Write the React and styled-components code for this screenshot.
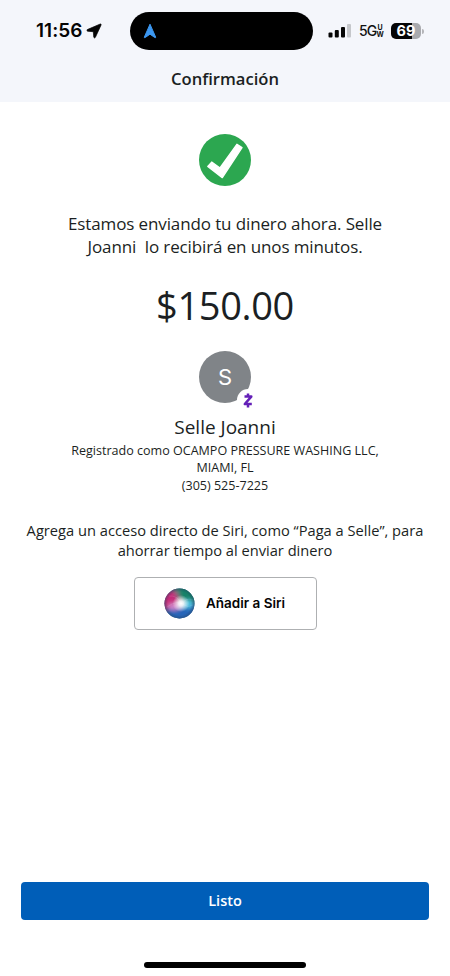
import React from "react";
import styled, { createGlobalStyle } from "styled-components";


const GlobalStyle = createGlobalStyle`
    * {
        box-sizing:border-box;
    }

    body {
        margin:0;
        background-color:#fff;
        font-family:"Open Sans", "Noto Sans", sans-serif;
        color:#1b1f23;
    }
`;

const Screen = styled.div`
    display:flex;
    flex-direction:column;
    width:450px;
    height:976px;
    overflow:hidden;
    background-color:#fff;
`;

const Header = styled.header`
    display:flow-root;
    height:102px;
    background-color:#f4f6fb;
`;

const StatusBar = styled.div`
    display:grid;
    grid-template-columns:130px 183px 137px;
    align-items:center;
    height:38px;
    margin-top:12px;
`;

const Clock = styled.div`
    display:flex;
    align-items:center;
    gap:4px;
    padding-left:36px;
    font:600 19px/22px Inter, sans-serif;
    letter-spacing:0.05px;
    color:#050505;
`;

const Island = styled.div`
    display:flex;
    align-items:center;
    height:38px;
    padding-left:12.5px;
    border-radius:19px;
    background-color:#000;
`;

const Signals = styled.div`
    display:flex;
    align-items:center;
    padding-left:15px;
`;

const Network = styled.div`
    display:flex;
    align-items:center;
    width:25px;
    margin-left:8px;
    font:500 14px/16px Inter, sans-serif;
    letter-spacing:-0.8px;
    color:#111;
`;

const Stacked = styled.span`
    display:flex;
    flex-direction:column;
    font-size:7px;
    font-weight:700;
    line-height:7px;
    letter-spacing:0;
    text-align:center;
`;

const Battery = styled.div`
    width:30px;
    height:16px;
    margin-left:7px;
    border-radius:5px;
    background:linear-gradient(to right, #050505 ${props=> props.$level}%, #a9aaae ${props=> props.$level}%);
    color:#fff;
    font:700 14.5px/16px Inter, sans-serif;
    text-align:center;
`;

const BatteryTip = styled.span`
    width:2px;
    height:5px;
    margin-left:1px;
    border-radius:0 2px 2px 0;
    background-color:#b4b5b9;
`;

const Title = styled.h1`
    margin:17px 0 0;
    font-size:16.6px;
    font-weight:600;
    line-height:24px;
    text-align:center;
`;

const Content = styled.main`
    flex:1;
    display:flex;
    flex-direction:column;
    align-items:center;
    padding-top:32px;
`;

const Text = styled.p`
    margin:${props=> props.$top || 0}px 0 0;
    font-size:${props=> props.$size}px;
    line-height:${props=> props.$line}px;
    letter-spacing:${props=> props.$spacing || 0}px;
    text-align:center;
    white-space:pre;
`;

const Avatar = styled.div`
    position:relative;
    display:flex;
    align-items:center;
    justify-content:center;
    width:52px;
    height:52px;
    margin-top:24.6px;
    border-radius:50%;
    background-color:#808488;
    color:#fff;
    font:400 22px/26px Inter, sans-serif;
`;

const ZelleBadge = styled.span`
    position:absolute;
    left:38px;
    top:38px;
    width:22px;
    height:22px;
    border-radius:50%;
    background-color:#fff;

    svg {
        display:block;
    }
`;

const SiriButton = styled.button`
    display:flex;
    align-items:center;
    gap:11px;
    width:183px;
    height:53px;
    margin-top:16px;
    padding:0 0 0 29.5px;
    border:1px solid #aeb0b2;
    border-radius:4px;
    background-color:#fff;
    color:#050505;
    font:600 13.5px/18px Inter, sans-serif;
    white-space:nowrap;
`;

const Footer = styled.footer`
    display:flex;
    flex-direction:column;
    align-items:center;
    padding:0 21px 8px;
`;

const DoneButton = styled.button`
    width:408px;
    height:38px;
    padding:0;
    border:0;
    border-radius:4px;
    background-color:#005eb8;
    color:#fff;
    font:600 14.5px/20px "Open Sans", sans-serif;
`;

const HomeIndicator = styled.div`
    width:162px;
    height:6px;
    margin-top:42px;
    border-radius:3px;
    background-color:#000;
`;

const LocationIcon = () => (
    <svg width="16" height="16" viewBox="0 0 16 16">
        <path d="M14.3 1 L1.3 6.6 Q.3 7.6 1.6 8.2 L7.3 8.7 L7.8 14.3 Q8.5 15.6 9.4 14.3 L15.1 1.9 Q15.3 .7 14.3 1Z" fill="#050505" stroke="#050505" strokeWidth=".7" strokeLinejoin="round" />
    </svg>
);

const NavIcon = () => (
    <svg width="14" height="16" viewBox="0 0 14 16">
        <path d="M7 1.2 L12.7 14.2 Q12.7 15 11.8 14.5 L7 11.2 L2.2 14.5 Q1.2 15 1.3 14.2Z" fill="#3c97f0" stroke="#3c97f0" strokeWidth="1" strokeLinejoin="round" />
    </svg>
);

const SignalIcon = () => (
    <svg width="23" height="16" viewBox="0 0 23 16">
        <rect x="0.5" y="9.5" width="4" height="5" rx="1" fill="#050505" />
        <rect x="6.8" y="7" width="4" height="7.5" rx="1" fill="#050505" />
        <rect x="13" y="4" width="4" height="10.5" rx="1" fill="#050505" />
        <rect x="19" y="1" width="4" height="13.5" rx="1" fill="#c5c7cb" />
    </svg>
);

const CheckIcon = () => (
    <svg width="52" height="52" viewBox="0 0 52 52">
        <circle cx="26" cy="26" r="26" fill="#2ca750" />
        <path d="M12.7 28.1 L21 34 L37.9 10.3 L43 13.6 L23.3 43.6 L8.8 32.4Z" fill="#fff" stroke="#fff" strokeWidth="1.4" strokeLinejoin="round" />
    </svg>
);

const ZelleIcon = () => (
    <svg width="22" height="22" viewBox="0 0 22 22">
        <path d="M7.5 7.6 H14.3 L7.8 15 H14.8 M11 4.5 V7.6 M11 15 V18.5" fill="none" stroke="#6420b8" strokeWidth="2.5" strokeLinejoin="round" />
    </svg>
);

const SiriIcon = () => (
    <svg width="31" height="31" viewBox="0 0 31 31">
        <defs>
            <clipPath id="orb"><circle cx="15.5" cy="15.5" r="15" /></clipPath>
            <filter id="soft" x="-50%" y="-50%" width="200%" height="200%"><feGaussianBlur stdDeviation="2" /></filter>
            <radialGradient id="glow">
                <stop offset="0" stopColor="#fff" />
                <stop offset=".3" stopColor="#fff" stopOpacity=".85" />
                <stop offset="1" stopColor="#fff" stopOpacity="0" />
            </radialGradient>
            <radialGradient id="rim">
                <stop offset=".75" stopColor="#23405c" stopOpacity="0" />
                <stop offset="1" stopColor="#23405c" stopOpacity=".5" />
            </radialGradient>
        </defs>
        <g clipPath="url(#orb)">
            <rect width="31" height="31" fill="#36618f" />
            <g filter="url(#soft)">
                <path d="M9 -2 H34 V14 L17 15Z" fill="#158269" />
                <path d="M-2 6 L8 0 L17 15 L5 23 L-2 22Z" fill="#c62c78" />
                <path d="M9 2 L14 2 L17 14Z" fill="#7b7180" />
                <path d="M1 22 L17 16 L32 17 V32 H3Z" fill="#2765b8" />
                <ellipse cx="24" cy="16" rx="6" ry="4" fill="#4fc4e2" />
                <ellipse cx="10" cy="18.5" rx="6" ry="3.5" fill="#d487cc" />
            </g>
            <path d="M5 8 Q13 7 18 16 Q22 9 29 12 M3 19 Q14 11 20 17 Q24 20 29 17" fill="none" stroke="#d7edff" strokeWidth=".7" opacity=".2" />
            <circle cx="17" cy="15.5" r="8.5" fill="url(#glow)" />
            <circle cx="15.5" cy="15.5" r="15.5" fill="url(#rim)" />
        </g>
    </svg>
);

const App = () => {
    return(
        <Screen>
            <GlobalStyle />
            <Header>
                <StatusBar>
                    <Clock>11:56 <LocationIcon /></Clock>
                    <Island><NavIcon /></Island>
                    <Signals>
                        <SignalIcon />
                        <Network>5G<Stacked>U<br />W</Stacked></Network>
                        <Battery $level={69}>69</Battery>
                        <BatteryTip />
                    </Signals>
                </StatusBar>
                <Title>Confirmación</Title>
            </Header>

            <Content>
                <CheckIcon />
                <Text $top={27.4} $size={17} $line={22.7} $spacing={-0.12}>
                    {"Estamos enviando tu dinero ahora. Selle\nJoanni  lo recibirá en unos minutos."}
                </Text>
                <Text $top={24} $size={38} $line={44} $spacing={-0.35}>$150.00</Text>
                <Avatar>
                    S
                    <ZelleBadge><ZelleIcon /></ZelleBadge>
                </Avatar>
                <Text $top={11} $size={19} $line={26}>Selle Joanni</Text>
                <Text $top={1.5} $size={12.55} $line={17.5}>
                    {"Registrado como OCAMPO PRESSURE WASHING LLC,\nMIAMI, FL\n(305) 525-7225"}
                </Text>
                <Text $top={27} $size={14.67} $line={19.8}>
                    {"Agrega un acceso directo de Siri, como “Paga a Selle”, para\nahorrar tiempo al enviar dinero"}
                </Text>
                <SiriButton><SiriIcon />Añadir a Siri</SiriButton>
            </Content>

            <Footer>
                <DoneButton>Listo</DoneButton>
                <HomeIndicator />
            </Footer>
        </Screen>
    )
}


export default App
